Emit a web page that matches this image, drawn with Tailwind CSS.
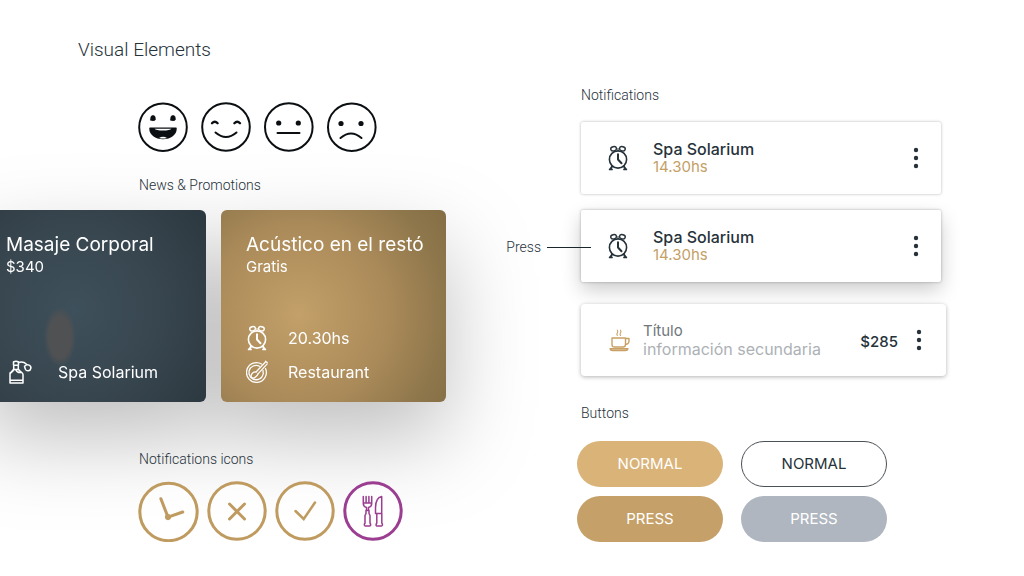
<!DOCTYPE html>
<html lang="es">
<head>
    <meta charset="UTF-8">
    <meta name="viewport" content="width=device-width, initial-scale=1.0">
    <title>Visual Elements</title>
    <script src="https://cdn.jsdelivr.net/npm/@tailwindcss/browser@4"></script>
</head>
<body class="bg-white overflow-x-hidden font-['Inter',sans-serif] text-[#26323a]">

    <!-- Shared icons -->
    <svg class="hidden">
        <symbol id="clock" viewBox="0 0 22 26" fill="none" stroke="currentColor" stroke-linecap="round" stroke-linejoin="round">
            <circle cx="11" cy="14.5" r="8.6" stroke-width="1.6"/>
            <ellipse cx="6.600" cy="3.800" rx="2.900" ry="2.100" transform="rotate(-15 6.600 3.800)" stroke-width="1.400"/>
            <ellipse cx="15.400" cy="3.800" rx="2.900" ry="2.100" transform="rotate(15 15.400 3.800)" stroke-width="1.400"/>
            <path d="M11 3.500v2" stroke-width="1"/>
            <path d="M11 9.300v5.200l3.500 3.800" stroke-width="2"/>
            <path d="M5.200 21.300 3.500 24M16.800 21.300 18.500 24" stroke-width="2"/>
            <path d="M2.600 24.400h2.400M17 24.400h2.400" stroke-width="1.700"/>
        </symbol>
        <symbol id="dots" viewBox="0 0 6 22" fill="currentColor">
            <circle cx="3" cy="3" r="2.200"/>
            <circle cx="3" cy="11" r="2.200"/>
            <circle cx="3" cy="19" r="2.200"/>
        </symbol>
    </svg>

    <main class="grid grid-cols-[145fr_111fr]">

        <!-- Left column -->
        <div class="pt-9">
            <h1 class="pl-[78px] font-['Roboto',sans-serif] font-light text-[19px] leading-7">Visual Elements</h1>

            <div class="mt-[38px] pl-[138px] flex gap-[13px]">
                <svg class="size-[50px]" viewBox="0 0 50 50" fill="none" stroke="#0b0f12" stroke-width="2" stroke-linecap="round">
                    <circle cx="25" cy="25.200" r="23.800"/>
                    <path d="M12.800 18v-2.200a2.200 2.200 0 0 1 4.400 0V18q-2.200 1.500-4.400 0zM32.800 18v-2.200a2.200 2.200 0 0 1 4.400 0V18q-2.200 1.500-4.400 0z" fill="#0b0f12" stroke-width=".8"/>
                    <path d="M12 26.300h26c0 6.200-5.500 10.200-13 10.200S12 32.500 12 26.300z" fill="#0b0f12" stroke-width="1.500" stroke-linejoin="round"/>
                    <path d="M16.500 26.800h17q-1.500 1.800-8.500 1.800t-8.500-1.800zM21 36q4-2.500 8 0-4 1-8 0z" fill="#fff" stroke="none"/>
                </svg>
                <svg class="size-[50px]" viewBox="0 0 50 50" fill="none" stroke="#0b0f12" stroke-width="2" stroke-linecap="round">
                    <circle cx="25" cy="25" r="23.800"/>
                    <path d="M11 21.200q2.800-3 5.600 0M33.400 21.200q2.800-3 5.600 0" stroke-width="2.400"/>
                    <path d="M14.500 30.500q10.500 9 21 0"/>
                </svg>
                <svg class="size-[50px]" viewBox="0 0 50 50" fill="none" stroke="#0b0f12" stroke-width="2" stroke-linecap="round">
                    <circle cx="24.800" cy="25" r="23.800"/>
                    <circle cx="14.700" cy="21" r="2.600" fill="#0b0f12" stroke="none"/>
                    <circle cx="34.300" cy="21" r="2.600" fill="#0b0f12" stroke="none"/>
                    <path d="M13.500 31h22"/>
                </svg>
                <svg class="size-[50px]" viewBox="0 0 50 50" fill="none" stroke="#0b0f12" stroke-width="2" stroke-linecap="round">
                    <circle cx="24.800" cy="25.200" r="23.800"/>
                    <circle cx="14" cy="21.500" r="2.600" fill="#0b0f12" stroke="none"/>
                    <circle cx="34" cy="21.500" r="2.600" fill="#0b0f12" stroke="none"/>
                    <path d="M13.500 36q10.500-9 21 0"/>
                </svg>
            </div>

            <h2 class="mt-[23px] pl-[139px] font-['Roboto',sans-serif] font-light text-sm leading-5">News &amp; Promotions</h2>

            <div class="mt-[15px] -ml-[18px] flex gap-[15px] text-white leading-5 drop-shadow-[0_36px_42px_rgba(0,0,0,0.25)]">
                <article class="w-[224px] h-48 pl-6 pt-[23px] pb-[18px] flex flex-col rounded-md bg-[radial-gradient(16px_30px_at_78px_127px,#4f5153_70%,transparent),radial-gradient(circle_at_92px_100px,#3e505b,#38464f_50%,#2c3840)]">
                    <h3 class="text-[19px] leading-6">Masaje Corporal</h3>
                    <p class="text-[15px]">$340</p>
                    <div class="mt-auto flex items-center gap-6">
                        <svg class="w-7 h-6" viewBox="0 0 28 24" fill="none" stroke="currentColor" stroke-width="1.500" stroke-linejoin="round" stroke-linecap="round">
                            <path d="M4 23V14.500c0-2 2-2.500 3.500-5h5c1.500 2.500 4.500 3 4.500 5V23zM4 20.200h13M7.700 9.500V5.200h4.600v4.300M7.500 5V2q2.500-1.500 5 0v3"/>
                            <path d="M8 9.500q-1.500 3-4 3.500M10 10q1 3 5.500 2.500M12.500 2.500c3-.8 6-.2 8 1.700"/>
                            <path d="M18.500 6.200c3.200-3 7-.5 6.300 2.300-.6 2.800-4.300 3.200-5.400.7z"/>
                        </svg>
                        <span>Spa Solarium</span>
                    </div>
                </article>
                <article class="w-[225px] h-48 pl-[25px] pt-[23px] pb-[18px] flex flex-col rounded-md bg-[radial-gradient(circle_at_78px_104px,#c3a069,#aa8a59_50%,#8f774c_80%,#846e45)]">
                    <h3 class="text-[19px] leading-6">Acústico en el restó</h3>
                    <p class="text-[15px]">Gratis</p>
                    <div class="mt-auto flex items-center gap-5">
                        <svg class="w-[22px] h-[26px]"><use href="#clock"/></svg>
                        <span>20.30hs</span>
                    </div>
                    <div class="mt-[9px] flex items-center gap-5">
                        <svg class="w-[22px] h-6" viewBox="0 0 22 24" fill="none" stroke="currentColor" stroke-width="1.300" stroke-linecap="round">
                            <path d="M15.500 4A9.900 9.900 0 1 0 19.500 8.500"/>
                            <path d="M13.500 6.200A7.200 7.200 0 1 0 17 10.500"/>
                            <path d="M10 12 19 2.500M12 13.800 21 4.200M19.500 1.200l1.800 1.600" stroke-width="1.200"/>
                            <path d="M10 12c-1.500-.5-3 .3-4 1.700-1 1.500-1.300 3-.5 3.900 1 .9 2.700.5 4-.6 1.500-1.200 2.300-2.200 2.500-3.200"/>
                        </svg>
                        <span>Restaurant</span>
                    </div>
                </article>
            </div>

            <h2 class="relative mt-[47px] pl-[139px] font-['Roboto',sans-serif] font-light text-sm leading-5">Notifications icons</h2>

            <div class="relative mt-3 pl-[138px] flex gap-2 text-[#bf9b60]">
                <svg class="size-[61px]" viewBox="0 0 60 60" fill="none" stroke="currentColor" stroke-width="3" stroke-linecap="round">
                    <circle cx="30" cy="30.500" r="28.200" fill="#fff" fill-opacity=".5"/>
                    <path d="M22.500 17.500 29.500 35.500 44 30.500"/>
                    <circle cx="29.500" cy="35.500" r="3" fill="currentColor" stroke="none"/>
                </svg>
                <svg class="size-[60px]" viewBox="0 0 60 60" fill="none" stroke="currentColor" stroke-width="3" stroke-linecap="round">
                    <circle cx="30" cy="30" r="28.200" fill="#fff" fill-opacity=".5"/>
                    <path d="M22.500 23 37.500 38M37.500 23 22.500 38"/>
                </svg>
                <svg class="size-[60px]" viewBox="0 0 60 60" fill="none" stroke="currentColor" stroke-width="3" stroke-linecap="round">
                    <circle cx="30" cy="30" r="28.200" fill="#fff" fill-opacity=".5"/>
                    <path d="M20.500 30 28.700 38 40 21.500" stroke-width="2.500"/>
                </svg>
                <svg class="size-[60px] text-[#9b3d90]" viewBox="0 0 60 60" fill="none" stroke="currentColor" stroke-width="1.500" stroke-linecap="round" stroke-linejoin="round">
                    <circle cx="30" cy="30" r="28.200" stroke-width="3" fill="#fff" fill-opacity=".5"/>
                    <path d="M20.300 15.500v7q0 3 3.200 4v3h2v-3q3.200-1 3.200-4v-7M23.100 15.500v6M25.900 15.500v6M20.500 22h8"/>
                    <path d="M23 29.500v3l-1 2v7.500q-1.500 2.500.3 3h4.500q1.700-.5.2-3v-7.500l-1-2v-3"/>
                    <path d="M38.700 15.500c-4.500 1-6.200 5-6.200 11v6h6.200zM33.800 32.500v9.500q-1.500 2.500 0 3h4.700q1.800-.5.300-3v-9.500"/>
                </svg>
            </div>
        </div>

        <!-- Right column -->
        <div class="relative pt-[85px] pr-[78px] pl-px leading-[18px]">
            <h2 class="font-['Roboto',sans-serif] font-light text-sm leading-5">Notifications</h2>

            <div class="mt-[17px] mr-[5px] h-[72px] pl-[26px] pr-[22px] flex items-center bg-white rounded-xs shadow-[0_0_3px_rgba(0,0,0,0.3)]">
                <svg class="w-[22px] h-[26px]"><use href="#clock"/></svg>
                <div class="ml-6 flex-1">
                    <p class="font-medium">Spa Solarium</p>
                    <p class="text-[15px] text-[#c4a067]">14.30hs</p>
                </div>
                <button type="button" aria-label="Opciones"><svg class="w-[6px] h-[22px]"><use href="#dots"/></svg></button>
            </div>

            <div class="relative mt-4 mr-[5px] h-[72px] pl-[26px] pr-[22px] flex items-center bg-white rounded-xs shadow-[0_0_3px_rgba(0,0,0,0.3),0_8px_20px_rgba(0,0,0,0.2)]">
                <div class="absolute right-full top-[27px] -mr-[10px] flex items-center gap-[6px]">
                    <span class="font-['Roboto',sans-serif] font-light text-sm leading-5">Press</span>
                    <span class="w-11 h-px bg-[#1b252c]"></span>
                </div>
                <svg class="w-[22px] h-[26px]"><use href="#clock"/></svg>
                <div class="ml-6 flex-1">
                    <p class="font-medium">Spa Solarium</p>
                    <p class="text-[15px] text-[#c4a067]">14.30hs</p>
                </div>
                <button type="button" aria-label="Opciones"><svg class="w-[6px] h-[22px]"><use href="#dots"/></svg></button>
            </div>

            <div class="relative mt-[22px] h-[72px] pl-7 pr-6 flex items-center bg-white rounded-sm shadow-[0_1px_4px_rgba(0,0,0,0.3)]">
                <svg class="w-[22px] h-6 text-[#c9a064]" viewBox="0 0 22 24" fill="none" stroke="currentColor" stroke-width="1.400" stroke-linecap="round" stroke-linejoin="round">
                    <path d="M3 10h13.500v6.500q0 2.500-2.500 2.500H5.500Q3 19 3 16.500zM16.500 10.500H20v2.500q0 3-3.500 3.500M1 20.800h18q-.5 1.700-2.500 1.700h-13q-2 0-2.500-1.700z"/>
                    <path d="M8.300 7.500q-1-1.200 0-2.500t0-2.800M11.500 7.500q-1-1.200 0-2.500t0-2.800" stroke-width="1.100"/>
                </svg>
                <div class="ml-3 flex-1">
                    <p class="text-[15px] text-[#70767b]">Título</p>
                    <p class="text-[#adb1b6]">información secundaria</p>
                </div>
                <p class="mt-1 mr-[18px] text-[15px] font-medium">$285</p>
                <button type="button" aria-label="Opciones"><svg class="w-[6px] h-[22px]"><use href="#dots"/></svg></button>
            </div>

            <h2 class="mt-[27px] font-['Roboto',sans-serif] font-light text-sm leading-5">Buttons</h2>

            <div class="mt-[18px] -ml-1 grid grid-cols-[146px_146px] gap-x-[18px] gap-y-[9px] text-[15px]">
                <button type="button" class="h-[46px] rounded-full bg-[#dab379] text-white">NORMAL</button>
                <button type="button" class="h-[46px] rounded-full border border-[#4a5157] bg-white">NORMAL</button>
                <button type="button" class="h-[46px] rounded-full bg-[#c5a169] text-white">PRESS</button>
                <button type="button" class="h-[46px] rounded-full bg-[#afb6bf] text-white">PRESS</button>
            </div>
        </div>
    </main>
</body>
</html>
